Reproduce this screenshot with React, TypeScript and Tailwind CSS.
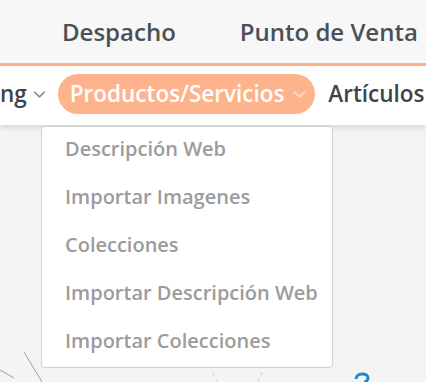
import React from 'react';

const Chevron: React.FC<{ className?: string }> = ({ className = "" }) => (
  <svg viewBox="0 0 12 8" className={className} fill="none" stroke="currentColor" strokeWidth="1.4" strokeLinecap="round" strokeLinejoin="round">
    <path d="M1.5 1.8 L6 6.2 L10.5 1.8" />
  </svg>
);

const menuItems = [
  'Descripción Web',
  'Importar Imagenes',
  'Colecciones',
  'Importar Descripción Web',
  'Importar Colecciones',
];

export default function App() {
  return (
    <div className="relative w-[426px] h-[382px] overflow-hidden bg-[#f4f4f4] font-['Open_Sans',sans-serif]">
      {/* Top bar */}
      <div className="h-[63px] bg-[#f7f7f7] flex items-center pl-[62px] gap-[64px] whitespace-nowrap">
        <span className="text-[24px] font-semibold text-[#4b5057]">Despacho</span>
        <span className="text-[24px] font-semibold text-[#4b5057]">Punto de Venta</span>
      </div>
      <div className="h-[3px] bg-[#fdb28a]" />

      {/* Second nav */}
      <div className="h-[59px] pb-[3px] bg-white flex items-center whitespace-nowrap shadow-[0_3px_5px_rgba(0,0,0,0.12)] relative z-10">
        <div className="flex items-center text-[22.5px] font-semibold text-[#3f444a]">
          <span className="flex items-center">
            ng
            <Chevron className="w-[13px] h-[9px] ml-[6px] text-[#8a8e93]" />
          </span>
          <span className="ml-[12px] h-[40px] pl-[12px] pr-[9px] rounded-full bg-[#fdb38c] text-white flex items-center">
            Productos/Servicios
            <Chevron className="w-[13px] h-[9px] ml-[9px] text-[#fde2d2]" />
          </span>
          <span className="ml-[13px]">Artículos</span>
        </div>
      </div>

      {/* Background doodles */}
      <svg className="absolute left-0 top-[340px]" width="426" height="42" viewBox="0 0 426 42" fill="none">
        <path d="M24 12 L42 42" stroke="#9aa0a6" strokeWidth="1" />
        <path d="M0 30 L14 38" stroke="#9aa0a6" strokeWidth="1" />
        <path d="M213 33 L214 36 M216 40 L217 42" stroke="#d4d8dc" strokeWidth="1.5" />
        <path d="M262 32 L261 35 M259 39 L258 42" stroke="#d4d8dc" strokeWidth="1.5" />
        <path d="M356 39 C356 33 368 32 368 38 C368 41 365 42 364 42" stroke="#1e88d6" strokeWidth="3" />
      </svg>

      {/* Dropdown */}
      <div className="absolute left-[41px] top-[126px] w-[292px] h-[242px] bg-white border border-[#d0d0d0] rounded-[4px] z-20">
        <div className="-mt-[2px]">
          {menuItems.map((item) => (
            <div key={item} className="h-[48px] flex items-center pl-[23px] text-[20px] font-semibold text-[#9c9c9c] whitespace-nowrap">
              {item}
            </div>
          ))}
        </div>
      </div>
    </div>
  );
}
